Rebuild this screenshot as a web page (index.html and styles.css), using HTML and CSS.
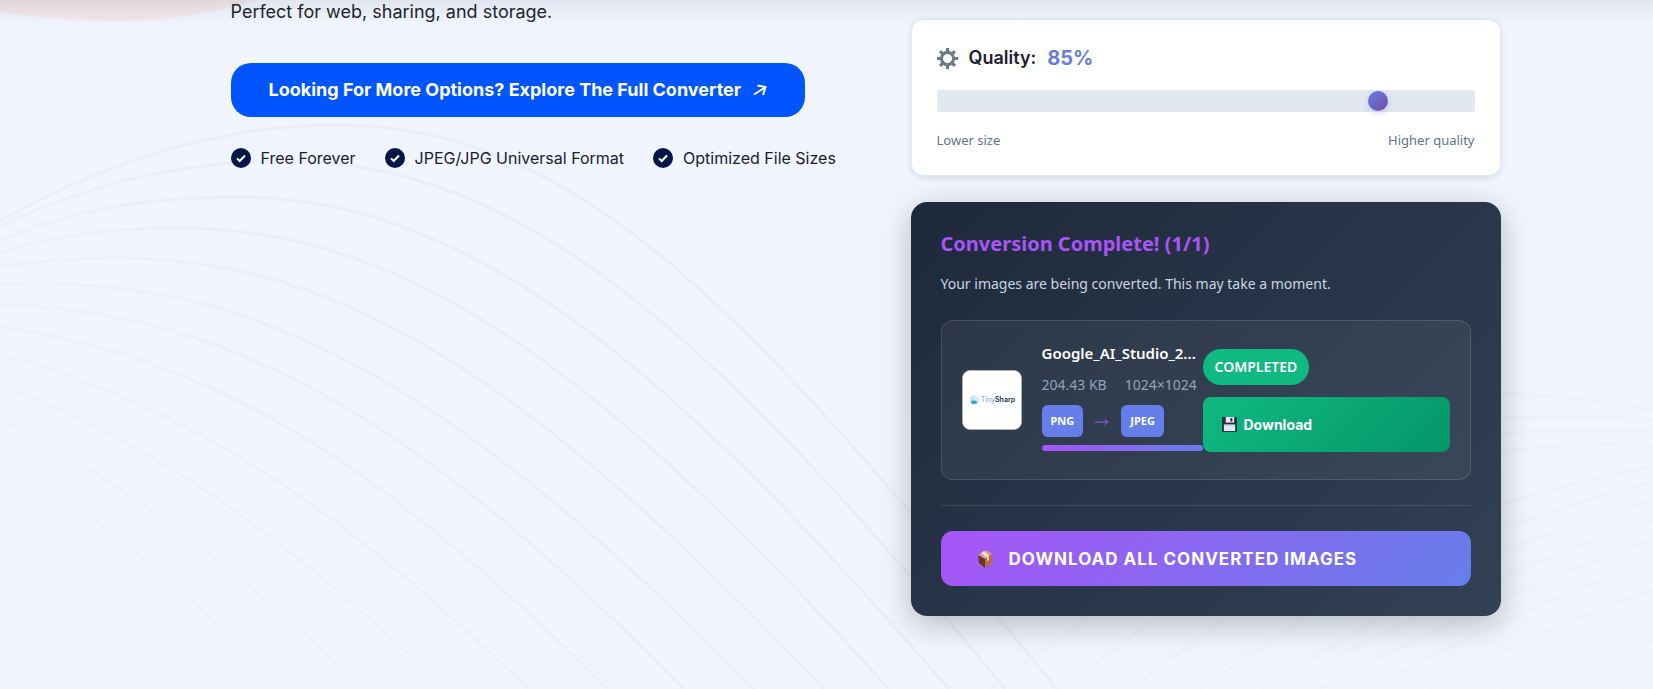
FILE: index.html
```html
<!DOCTYPE html>
<html lang="en">
<head>
<meta charset="utf-8">
<meta name="viewport" content="width=device-width, initial-scale=1">
<title>PNG to JPEG Converter</title>
<link rel="stylesheet" href="styles.css">
</head>
<body>
<div class="page">
  <svg class="backdrop" viewBox="0 0 1653 689" preserveAspectRatio="xMidYMin slice" aria-hidden="true">
    <defs>
      <linearGradient id="fade" gradientUnits="userSpaceOnUse" x1="0" y1="689" x2="450" y2="239">
        <stop offset="0" stop-color="#eaeef8" stop-opacity=".2"/>
        <stop offset="1" stop-color="#eaeef8"/>
      </linearGradient>
      <filter id="soft"><feGaussianBlur stdDeviation="1"/></filter>
    </defs>
    <path class="blob" filter="url(#soft)" d="M-10 -10V12C20 14 50 20 110 21C170 22 220 12 290 -10Z"/>
    <g class="waves">
      <path d="M0 220C110 160 220 125 335 125C575 125 740 300 1057 689"/>
      <path d="M0 226C90 183 185 161 285 161C520 161 710 330 1005 689"/>
      <path d="M0 240C70 210 150 197 235 197C465 197 660 355 949 689"/>
      <path d="M0 253C55 235 115 228 176 228C410 228 600 370 889 689"/>
      <path d="M0 267C40 260 80 258 117 258C350 258 540 390 824 689"/>
      <path d="M0 285C15 284 30 284 47 284C280 284 480 410 754 689"/>
      <path d="M0 305C230 310 420 420 684 689"/>
      <path d="M0 327C200 355 370 450 607 689"/>
      <path d="M0 354C180 405 330 495 528 689"/>
      <path d="M0 385C160 445 290 540 446 689"/>
      <path d="M0 419C130 485 240 570 364 689"/>
      <path d="M0 457C100 515 190 595 285 689"/>
      <path d="M0 500C80 555 140 615 208 689"/>
      <path d="M0 553C50 595 90 640 132 689"/>
      <path d="M0 607C25 634 45 660 65 689"/>
    </g>
    <g class="waves waves-faint">
      <path d="M1470 392C1540 394 1600 400 1653 410"/>
      <path d="M1470 418C1530 416 1600 416 1653 420"/>
      <path d="M1470 436C1530 430 1600 428 1653 432"/>
      <path d="M1470 456C1530 446 1600 442 1653 446"/>
      <path d="M1400 540C1480 510 1570 480 1653 467"/>
      <path d="M1400 568C1480 535 1570 502 1653 482"/>
      <path d="M1380 605C1470 565 1560 525 1653 500"/>
      <path d="M1340 655C1440 605 1550 552 1653 520"/>
      <path d="M1320 689C1440 625 1550 575 1653 540"/>
      <path d="M1370 689C1460 640 1560 592 1653 562"/>
      <path d="M1430 689C1500 650 1580 615 1653 590"/>
      <path d="M1500 689C1550 660 1600 635 1653 612"/>
      <path d="M1570 689L1653 640M1620 689L1653 668"/>
      <path d="M990 689L1110 600M1060 689L1180 600M1130 689L1250 600M1200 689L1330 600M1260 689L1410 600"/>
    </g>
  </svg>

  <main class="container">
    <section class="intro">
      <p class="lead">Perfect for web, sharing, and storage.</p>
      <a class="cta" href="#">Looking For More Options? Explore The Full Converter
        <svg class="cta-arrow" viewBox="0 0 14 14" aria-hidden="true"><path d="M1 11.5L12 4.5M4.5 2.5L12.5 4L10 12"/></svg>
      </a>
      <ul class="features">
        <li><svg viewBox="0 0 20 20" aria-hidden="true"><circle cx="10" cy="10" r="10"/><path d="M6 10.4L8.7 13L14 7.5"/></svg>Free Forever</li>
        <li><svg viewBox="0 0 20 20" aria-hidden="true"><circle cx="10" cy="10" r="10"/><path d="M6 10.4L8.7 13L14 7.5"/></svg>JPEG/JPG Universal Format</li>
        <li><svg viewBox="0 0 20 20" aria-hidden="true"><circle cx="10" cy="10" r="10"/><path d="M6 10.4L8.7 13L14 7.5"/></svg>Optimized File Sizes</li>
      </ul>
    </section>

    <section class="tool">
      <div class="quality">
        <label class="quality-head" for="quality">
          <svg class="gear" viewBox="0 0 20 20" aria-hidden="true">
            <path d="M10 0V4M10 16V20M0 10H4M16 10H20M2.9 2.9L5.8 5.8M14.2 14.2L17.1 17.1M17.1 2.9L14.2 5.8M5.8 14.2L2.9 17.1"/>
            <circle cx="10" cy="10" r="5.8"/>
          </svg>
          <span>Quality:</span>
          <output class="quality-value">85%</output>
        </label>
        <input class="slider" id="quality" type="range" min="10" max="100" value="85">
        <div class="scale"><span>Lower size</span><span>Higher quality</span></div>
      </div>

      <div class="results">
        <h2 class="results-title">Conversion Complete! (1/1)</h2>
        <p class="results-note">Your images are being converted. This may take a moment.</p>
        <article class="item">
          <div class="thumb">
            <svg class="thumb-mark" viewBox="0 0 12 12" aria-hidden="true"><circle cx="6.5" cy="6" r="4.5" fill="#b9e2f5"/><circle cx="2.5" cy="4" r="1.5" fill="#d5eefa"/><circle cx="8.5" cy="4.5" r="2.5" fill="#d9effa"/><path d="M3 7.5Q6 5.5 9 7.5V9Q6 11 3 9Z" fill="#3fa3d3"/></svg>
            <span class="thumb-name">Tiny<b>Sharp</b></span>
          </div>
          <div class="info">
            <h3 class="name">Google_AI_Studio_2...</h3>
            <div class="meta"><span>204.43 KB</span><span>1024×1024</span></div>
            <div class="formats"><span class="tag">PNG</span><svg class="to" viewBox="0 0 14 8" role="img" aria-label="to"><path d="M0 5H12.5M9.5 2.5L13 5L9.5 7.5"/></svg><span class="tag">JPEG</span></div>
            <div class="progress"></div>
          </div>
          <div class="status">
            <span class="badge">COMPLETED</span>
            <button class="download" type="button">
              <svg class="disk" viewBox="0 0 16 16" aria-hidden="true"><path fill="#26303c" d="M0 0H15L16 1V16H1L0 15Z"/><path fill="#e6eaf5" d="M4 0H13V6H4Z"/><path fill="#26303c" d="M9 1H11V5H9Z"/><path fill="#d9ecfb" d="M2 8H14V15H2Z"/><path fill="#a6b7c8" d="M2 8H14V9H2Z"/></svg>
              Download
            </button>
          </div>
        </article>
        <div class="actions">
          <button class="download-all" type="button">
            <svg class="box" viewBox="0 0 16 20" aria-hidden="true"><path fill="#d8a184" d="M1 6L9 1L15 5L8 10Z"/><path fill="#6d3524" d="M1 6L8 10V19L2 14Z"/><path fill="#b86a43" d="M8 10L15 5V14L8 19Z"/><path fill="#efe3e4" d="M4 4L7 2L12 7L10 8.5Z"/><path fill="#e6c6b8" d="M10 8.5L12 7V11L10 12.5Z"/></svg>
            DOWNLOAD ALL CONVERTED IMAGES
          </button>
        </div>
      </div>
    </section>
  </main>
</div>
</body>
</html>
```

FILE: styles.css
```css
* { box-sizing: border-box; }

body {
  margin: 0;
  background: #f0f5ff;
  color: #212529;
  font-family: Inter, "Liberation Sans", sans-serif;
}

.page {
  position: relative;
  min-height: 100vh;
  overflow: hidden;
}

.page::after {
  content: "";
  position: absolute;
  inset: 0 0 auto;
  height: 28px;
  background: linear-gradient(rgba(40, 45, 60, .08), rgba(40, 45, 60, .03) 50%, rgba(40, 45, 60, 0));
  pointer-events: none;
}

.backdrop {
  position: absolute;
  inset: 0;
  width: 100%;
  height: 100%;
}

.blob { fill: #f3e6ec; }
.waves { fill: none; stroke: url(#fade); stroke-width: 3; }
.waves-faint { stroke: #edf1fb; stroke-width: 2; }

.container {
  position: relative;
  display: grid;
  grid-template-columns: minmax(0, 1fr) 590px;
  gap: 24px;
  max-width: 1352px;
  margin: 0 auto;
  padding-right: 2px;
}

.intro { padding-left: 80px; }

.lead {
  margin: 0 0 39px;
  font-size: 18px;
  line-height: 24px;
}

.cta {
  display: inline-flex;
  align-items: center;
  gap: 12px;
  padding: 15px 38px;
  border-radius: 20px;
  background: #0055ff;
  color: #fff;
  font-size: 18px;
  font-weight: 700;
  line-height: 24px;
  text-decoration: none;
  white-space: nowrap;
}

.cta-arrow {
  width: 14px;
  height: 14px;
  fill: none;
  stroke: #fff;
  stroke-width: 2;
}

.features {
  display: flex;
  gap: 29px;
  margin: 29px 0 0;
  padding: 0;
  list-style: none;
  color: #1b2130;
  font-size: 16px;
  line-height: 24px;
  white-space: nowrap;
}

.features li { display: flex; align-items: center; gap: 10px; }
.features svg { width: 20px; height: 20px; fill: #04164a; }
.features path { fill: none; stroke: #fff; stroke-width: 2; }

.tool {
  display: grid;
  gap: 26px;
  padding: 19px 0 73px;
  font-family: "Noto Sans", "Open Sans", sans-serif;
}

.quality {
  padding: 24px 25px;
  border: 1px solid #e2e8f0;
  border-radius: 12px;
  background: #fff;
  box-shadow: 0 2px 6px rgba(30, 41, 80, .12);
}

.quality-head {
  display: flex;
  align-items: center;
  gap: 11px;
  color: #1e2130;
  font: 600 18px/28px Inter, sans-serif;
}

.gear { width: 21px; height: 21px; fill: none; stroke: #6c7a86; stroke-width: 3; }
.quality-value { color: #667eda; font-size: 20px; font-weight: 700; }

.slider {
  appearance: none;
  display: block;
  width: 100%;
  height: 22px;
  margin: 18px 0;
  border-radius: 3px;
  background: #e2e8f0;
}

.slider::-webkit-slider-thumb {
  appearance: none;
  width: 20px;
  height: 20px;
  border-radius: 50%;
  background: linear-gradient(135deg, #667eea, #764ba2);
  box-shadow: 0 2px 6px rgba(102, 126, 234, .3);
}

.scale {
  display: flex;
  justify-content: space-between;
  padding-bottom: 1px;
  color: #64748b;
  font-size: 13px;
  line-height: 20px;
}

.results {
  padding: 30px;
  border-radius: 16px;
  background: linear-gradient(135deg, #1e293b, #334155);
  box-shadow: 0 8px 32px rgba(0, 0, 0, .25);
  color: #fff;
}

.results-title {
  margin: 0 0 16px;
  color: #a855f7;
  font-size: 20px;
  line-height: 24px;
}

.results-note {
  margin: 0 0 24px;
  color: #cbd5e1;
  font-size: 14px;
  line-height: 24px;
}

.item {
  display: grid;
  grid-template-columns: 80px minmax(0, 161fr) minmax(0, 247fr);
  align-items: center;
  padding: 20px;
  border: 1px solid rgba(255, 255, 255, .12);
  border-radius: 12px;
  background: rgba(255, 255, 255, .05);
}

.thumb {
  display: flex;
  align-items: center;
  justify-content: center;
  gap: 1px;
  width: 60px;
  height: 60px;
  border: 1px solid #aab2bd;
  border-radius: 8px;
  background: #fff;
}

.thumb-mark { width: 12px; height: 12px; }
.thumb-name { color: #6fa8cd; font: 7px/10px Inter, sans-serif; }
.thumb-name b { color: #1d2951; font-weight: 600; }

.name {
  margin: 0;
  font-size: 15px;
  font-weight: 600;
  line-height: 24px;
  white-space: nowrap;
}

.meta {
  display: flex;
  gap: 18px;
  margin: 10px 0;
  color: #94a3b8;
  font-size: 14px;
  line-height: 20px;
  white-space: nowrap;
}

.formats { display: flex; align-items: center; gap: 12px; }

.tag {
  padding: 6px 9px;
  border-radius: 6px;
  background: #667eea;
  font-size: 11px;
  font-weight: 700;
  line-height: 20px;
}

.to { width: 14px; height: 8px; fill: none; stroke: #a855f7; stroke-width: 1; }

.progress {
  height: 6px;
  margin: 8px 0;
  border-radius: 3px;
  background: linear-gradient(90deg, #a855f7, #667eea);
}

.status {
  display: grid;
  justify-items: start;
  gap: 12px;
}

.badge {
  padding: 8px 12px;
  border-radius: 20px;
  background: #10b981;
  font-size: 14px;
  font-weight: 600;
  line-height: 20px;
}

.download,
.download-all {
  display: flex;
  align-items: center;
  width: 100%;
  height: 55px;
  border: 0;
  color: #fff;
  font-family: Inter, sans-serif;
  font-weight: 700;
  white-space: nowrap;
}

.download {
  gap: 7px;
  padding: 0 19px;
  border-radius: 8px;
  background: linear-gradient(135deg, #10b981, #059669);
  font-size: 14px;
}

.disk { width: 15px; height: 15px; }

.actions {
  margin-top: 25px;
  padding-top: 25px;
  border-top: 1px solid rgba(255, 255, 255, .1);
}

.download-all {
  gap: 16px;
  padding: 0 36px;
  border-radius: 12px;
  background: linear-gradient(135deg, #a855f7, #667eea);
  font-size: 17px;
  letter-spacing: 1px;
}

.box { width: 16px; height: 20px; }
```
